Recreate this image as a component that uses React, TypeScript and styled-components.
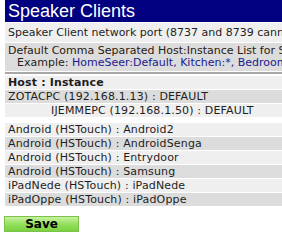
import React from "react";
import styled, { createGlobalStyle } from "styled-components";

const Global = createGlobalStyle`
  body {
    margin: 0;
    background: #ffffff;
    font-family: "DejaVu Sans", Verdana, sans-serif;
    overflow: hidden;
  }
`;

const Page = styled.div`
  width: 282px;
  height: 240px;
  padding-left: 5px;
  box-sizing: border-box;
  overflow: hidden;
`;

const TitleBar = styled.div`
  width: 300px;
  height: 22px;
  background: #000080;
  color: #ffffff;
  font-family: "Liberation Sans", Arial, sans-serif;
  font-size: 18px;
  line-height: 22px;
  padding-left: 3px;
  white-space: nowrap;
`;

const Table = styled.div`
  width: 300px;
  display: flex;
  flex-direction: column;
  gap: 1px;
  margin-top: 1px;
`;

const Cell = styled.div<{ $shade?: "light" | "dark"; $indent?: number; $bold?: boolean }>`
  height: 13px;
  line-height: 13px;
  background: ${(p) => (p.$shade === "dark" ? "#dcdcdc" : "#efefef")};
  font-size: 11px;
  letter-spacing: 0.15px;
  font-weight: ${(p) => (p.$bold ? "bold" : "normal")};
  color: #1e1e1e;
  padding-left: ${(p) => p.$indent ?? 3}px;
  white-space: nowrap;
  overflow: hidden;
`;

const PortRow = styled(Cell)`
  height: 19px;
  line-height: 19px;
  letter-spacing: 0;
`;

const Info = styled.div`
  background: #dcdcdc;
  padding: 2px 0 2px 3px;
  font-size: 11px;
  line-height: 12px;
  white-space: nowrap;
  overflow: hidden;
  color: #2a2010;
`;

const Example = styled.div`
  padding-left: 9px;
  color: #1e1e1e;
  & span {
    color: #1a1a90;
  }
`;

const Divider = styled.div`
  height: 2px;
  background: #a8a8a8;
  border-bottom: 1px solid #ffffff;
  margin: 1px 0 0;
`;

const Spacer = styled.div`
  height: 4px;
`;

const SaveButton = styled.button`
  margin-top: 10px;
  margin-left: -1px;
  width: 75px;
  height: 16px;
  border: 1px solid #7cc24a;
  background: linear-gradient(#c9f2a2 0%, #94e05c 50%, #7ad23e 100%);
  font-family: Verdana, "DejaVu Sans", sans-serif;
  font-weight: bold;
  font-size: 12px;
  line-height: 12px;
  padding: 0;
  color: #000;
`;

const hosts = [
  "Android (HSTouch) : Android2",
  "Android (HSTouch) : AndroidSenga",
  "Android (HSTouch) : Entrydoor",
  "Android (HSTouch) : Samsung",
  "iPadNede (HSTouch) : iPadNede",
  "iPadOppe (HSTouch) : iPadOppe",
];

export default function App() {
  return (
    <>
      <Global />
      <Page>
        <TitleBar>Speaker Clients</TitleBar>
        <Table>
          <PortRow>Speaker Client network port (8737 and 8739 cannot be changed)</PortRow>
          <Info>
            <div>Default Comma Separated Host:Instance List for Speak</div>
            <Example>
              Example: <span>HomeSeer:Default, Kitchen:*, Bedroom:*</span>
            </Example>
          </Info>
        </Table>
        <Divider />
        <Table>
          <Cell $bold>Host : Instance</Cell>
          <Cell $shade="dark">ZOTACPC (192.168.1.13) : DEFAULT</Cell>
          <Cell $indent={46}>IJEMMEPC (192.168.1.50) : DEFAULT</Cell>
          <Spacer />
          {hosts.map((h, i) => (
            <Cell key={h} $shade={i % 2 === 1 ? "dark" : "light"}>
              {h}
            </Cell>
          ))}
        </Table>
        <SaveButton>Save</SaveButton>
      </Page>
    </>
  );
}
